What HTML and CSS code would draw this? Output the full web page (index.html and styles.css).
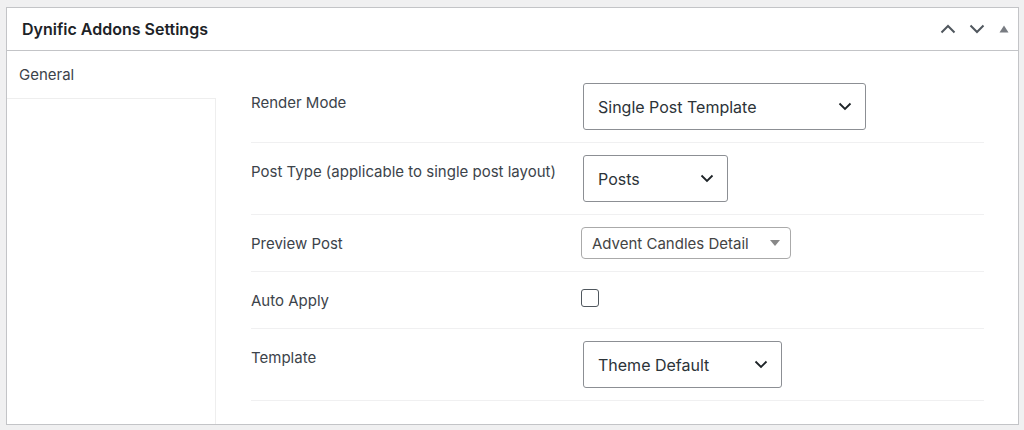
FILE: index.html
```html
<!DOCTYPE html>
<html lang="en">
<head>
<meta charset="UTF-8">
<meta name="viewport" content="width=device-width, initial-scale=1.0">
<title>Dynific Addons Settings</title>
<link rel="stylesheet" href="styles.css">
</head>
<body>
<div class="postbox">
  <div class="postbox-header">
    <h2 class="hndle">Dynific Addons Settings</h2>
    <div class="handle-actions">
      <span class="handle-btn">
        <svg width="18" height="12" viewBox="0 0 18 12"><path d="M2.5 9.5 L9 3 L15.5 9.5" fill="none" stroke="#50575e" stroke-width="2"/></svg>
      </span>
      <span class="handle-btn">
        <svg width="18" height="12" viewBox="0 0 18 12"><path d="M2.5 2.5 L9 9 L15.5 2.5" fill="none" stroke="#50575e" stroke-width="2"/></svg>
      </span>
      <span class="handle-btn small">
        <svg width="10" height="8" viewBox="0 0 10 8"><path d="M5 0.5 L9.5 7.5 L0.5 7.5 Z" fill="#787c82"/></svg>
      </span>
    </div>
  </div>
  <div class="panel-wrap">
    <div class="tabs">
      <div class="tab active">General</div>
      <div class="tabs-fill"></div>
    </div>
    <div class="panel">
      <div class="row first">
        <div class="label">Render Mode</div>
        <div class="field">
          <div class="select w-render">
            <span>Single Post Template</span>
            <svg width="14" height="9" viewBox="0 0 14 9"><path d="M1.5 1.5 L7 7 L12.5 1.5" fill="none" stroke="#1d2327" stroke-width="1.8"/></svg>
          </div>
        </div>
      </div>
      <div class="row">
        <div class="label">Post Type (applicable to single post layout)</div>
        <div class="field">
          <div class="select w-type">
            <span>Posts</span>
            <svg width="14" height="9" viewBox="0 0 14 9"><path d="M1.5 1.5 L7 7 L12.5 1.5" fill="none" stroke="#1d2327" stroke-width="1.8"/></svg>
          </div>
        </div>
      </div>
      <div class="row">
        <div class="label">Preview Post</div>
        <div class="field">
          <div class="select2">
            <span>Advent Candles Detail</span>
            <svg width="10" height="6" viewBox="0 0 10 6"><path d="M0 0 L10 0 L5 6 Z" fill="#888"/></svg>
          </div>
        </div>
      </div>
      <div class="row">
        <div class="label">Auto Apply</div>
        <div class="field">
          <span class="checkbox"></span>
        </div>
      </div>
      <div class="row">
        <div class="label">Template</div>
        <div class="field">
          <div class="select w-template">
            <span>Theme Default</span>
            <svg width="14" height="9" viewBox="0 0 14 9"><path d="M1.5 1.5 L7 7 L12.5 1.5" fill="none" stroke="#1d2327" stroke-width="1.8"/></svg>
          </div>
        </div>
      </div>
    </div>
  </div>
</div>
</body>
</html>
```

FILE: styles.css
```css
body {
  margin: 0;
  padding: 7px 5px 6px 6px;
  background-color: #f0f0f1;
  font-family: Inter, "Noto Sans", sans-serif;
  color: #3c434a;
}
.postbox {
  background-color: #fff;
  border: 1px solid #c3c4c7;
  height: 416px;
  display: flex;
  flex-direction: column;
}
.postbox-header {
  height: 42px;
  border-bottom: 1px solid #c3c4c7;
  display: flex;
  align-items: center;
  justify-content: space-between;
  padding-left: 15px;
}
.hndle {
  margin: 0;
  font-size: 16px;
  font-weight: 600;
  color: #1d2327;
}
.handle-actions {
  display: flex;
  align-items: center;
  padding-right: 1px;
}
.handle-btn {
  width: 29px;
  height: 30px;
  display: flex;
  align-items: center;
  justify-content: center;
}
.handle-btn.small {
  width: 26px;
}
.panel-wrap {
  flex: 1;
  display: flex;
}
.tabs {
  width: 209px;
  display: flex;
  flex-direction: column;
}
.tab {
  height: 47px;
  padding-left: 12px;
  line-height: 48px;
  font-size: 15px;
  color: #3c434a;
}
.tabs-fill {
  flex: 1;
  border-top: 1px solid #eee;
  border-right: 1px solid #eee;
}
.panel {
  flex: 1;
  padding: 20px 34px 0 35px;
}
.row {
  display: flex;
  align-items: flex-start;
  padding: 12px 0;
  border-bottom: 1px solid #f0f0f1;
}
.label {
  width: 330px;
  padding-top: 7px;
  line-height: 20px;
  font-size: 15px;
  color: #3c434a;
}
.row.first .label {
  padding-top: 10px;
}
.field {
  min-height: 32px;
}
.select {
  margin-left: 2px;
  height: 45px;
  border: 1px solid #8c8f94;
  border-radius: 3px;
  display: flex;
  align-items: center;
  justify-content: space-between;
  padding: 0 13px 0 14px;
  font-size: 16px;
  color: #2c3338;
}
.w-render {
  width: 254px;
}
.w-type {
  width: 116px;
}
.w-template {
  width: 170px;
}
.select2 {
  width: 188px;
  height: 30px;
  border: 1px solid #aaa;
  border-radius: 4px;
  display: flex;
  align-items: center;
  justify-content: space-between;
  padding: 0 10px 0 10px;
  font-size: 15px;
  color: #444;
}
.checkbox {
  display: block;
  margin-top: 5px;
  width: 16px;
  height: 16px;
  border: 1.5px solid #50575e;
  border-radius: 3px;
}
```
